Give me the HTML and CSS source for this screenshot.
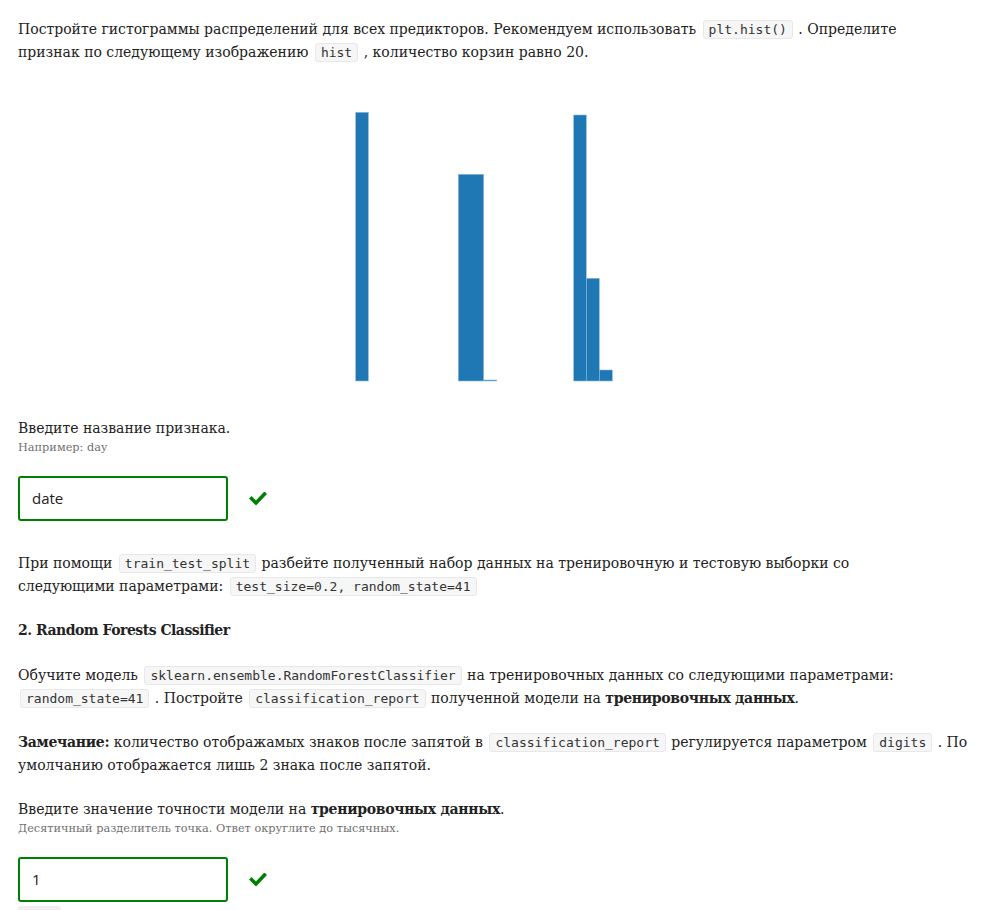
FILE: index.html
```html
<!DOCTYPE html>
<html lang="ru">
<head>
<meta charset="utf-8">
<title>Задание</title>
<link rel="stylesheet" href="styles.css">
</head>
<body>
<div class="page">
  <p class="text intro">Постройте гистограммы распределений для всех предикторов. Рекомендуем использовать <code>plt.hist()</code> . Определите<br>признак по следующему изображению <code>hist</code> , количество корзин равно 20.</p>

  <svg class="hist" width="956" height="353" viewBox="0 0 956 353" xmlns="http://www.w3.org/2000/svg">
    <g fill="#1f77b4" stroke="#8fbbda" stroke-width="0.6">
      <rect x="337.7" y="48.3" width="12.67" height="268.7"/>
      <rect x="440.3" y="110.3" width="25.4" height="206.7"/>
      <rect x="465.7" y="316" width="13" height="1"/>
      <rect x="555.7" y="51" width="12.6" height="266"/>
      <rect x="568.3" y="214.3" width="13" height="102.7"/>
      <rect x="581.3" y="306" width="13" height="11"/>
    </g>
  </svg>

  <div class="question">
    <div class="label">Введите название признака.</div>
    <div class="hint">Например: day</div>
    <div class="answer">
      <div class="input">date</div>
      <svg class="check" width="18" height="14" viewBox="0 0 18 14" xmlns="http://www.w3.org/2000/svg"><polyline points="2.5,6.5 7,11 15.5,2" fill="none" stroke="#008000" stroke-width="3.6" stroke-linecap="square"/></svg>
    </div>
  </div>

  <p class="text">При помощи <code>train_test_split</code> разбейте полученный набор данных на тренировочную и тестовую выборки со<br>следующими параметрами: <code>test_size=0.2, random_state=41</code></p>

  <h3 class="heading">2. Random Forests Classifier</h3>

  <p class="text">Обучите модель <code>sklearn.ensemble.RandomForestClassifier</code> на тренировочных данных со следующими параметрами:<br><code>random_state=41</code> . Постройте <code>classification_report</code> полученной модели на <strong>тренировочных данных</strong>.</p>

  <p class="text"><strong>Замечание:</strong> количество отображамых знаков после запятой в <code>classification_report</code> регулируется параметром <code>digits</code> . По<br>умолчанию отображается лишь 2 знака после запятой.</p>

  <div class="question">
    <div class="label">Введите значение точности модели на <strong>тренировочных данных</strong>.</div>
    <div class="hint">Десятичный разделитель точка. Ответ округлите до тысячных.</div>
    <div class="answer">
      <div class="input">1</div>
      <svg class="check" width="18" height="14" viewBox="0 0 18 14" xmlns="http://www.w3.org/2000/svg"><polyline points="2.5,6.5 7,11 15.5,2" fill="none" stroke="#008000" stroke-width="3.6" stroke-linecap="square"/></svg>
    </div>
    <div class="submit"></div>
  </div>
</div>
</body>
</html>
```
FILE: styles.css
```css
html, body {
  margin: 0;
  padding: 0;
  background: #ffffff;
}

.page {
  width: 956px;
  padding: 18px 18px 0 18px;
  font-family: "DejaVu Serif", "Liberation Serif", serif;
  font-size: 14px;
  line-height: 23px;
  color: #222222;
}

.text {
  margin: 0 0 21px 0;
}

.text.intro {
  margin-bottom: 0;
}

code {
  font-family: "DejaVu Sans Mono", "Liberation Mono", monospace;
  font-size: 13px;
  line-height: 17px;
  background: #f6f6f6;
  border: 1px solid #e8e8e8;
  border-radius: 3px;
  padding: 0 5px;
  margin: 0 1px 0 2px;
  color: #333333;
  display: inline-block;
  vertical-align: baseline;
}

strong {
  font-weight: bold;
  letter-spacing: -0.3px;
}

.hist {
  display: block;
}

.heading {
  margin: 1px 0 22px 0;
  font-size: 14px;
  line-height: 23px;
  font-weight: bold;
  letter-spacing: -0.5px;
}

.question {
  margin: 0 0 31px 0;
}

.label {
  line-height: 23px;
}

.hint {
  font-size: 11.3px;
  line-height: 18px;
  color: #707070;
  margin-top: -1px;
}

.answer {
  display: flex;
  align-items: center;
  gap: 21px;
  margin-top: 19px;
}

.input {
  box-sizing: border-box;
  width: 210px;
  height: 45px;
  border: 2px solid #008000;
  border-radius: 3px;
  padding: 0 12px;
  display: flex;
  align-items: center;
  font-family: "Open Sans", "Noto Sans", sans-serif;
  font-size: 15px;
  color: #222222;
}

.check {
  display: block;
}

.submit {
  width: 43px;
  height: 20px;
  margin-top: 4px;
  background: #eeeeee;
  border-radius: 3px;
}
```
